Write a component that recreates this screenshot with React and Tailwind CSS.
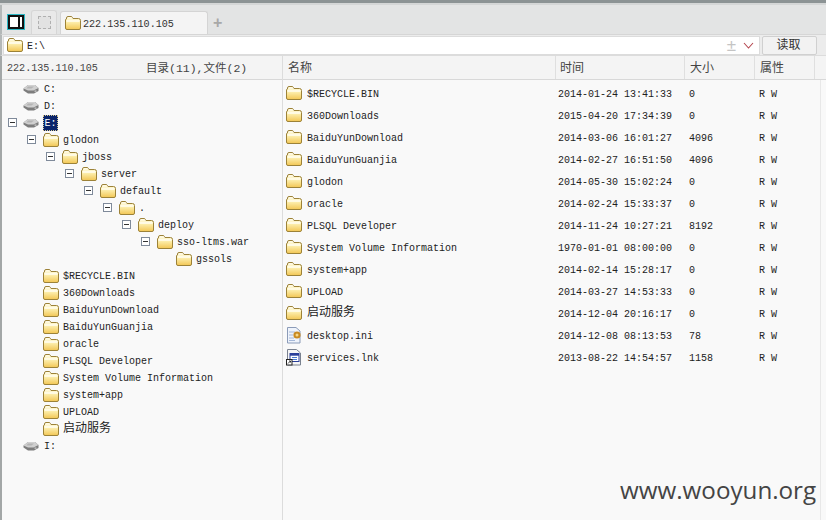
const MONO = "font-['Liberation_Mono','Noto_Sans_CJK_SC',monospace]";

function Folder({ className = "" }) {
  return (
    <svg width="16" height="14" viewBox="0 0 16 14" className={"shrink-0 " + className}>
      <defs>
        <linearGradient id="fg" x1="0" y1="0" x2="0" y2="1">
          <stop offset="0" stopColor="#fffdf0" />
          <stop offset="0.4" stopColor="#fdf0b0" />
          <stop offset="1" stopColor="#f2c654" />
        </linearGradient>
      </defs>
      <path d="M1.5 3 V2 Q1.5 .5 3 .5 H6 Q7 .5 7.5 1.5 L8 2.5 H13.5 Q15.5 2.5 15.5 4.5 V12 Q15.5 13.5 14 13.5 H2 Q.5 13.5 .5 12 V4 Q.5 3 1.5 3 Z" fill="url(#fg)" stroke="#9c8238" strokeWidth="1" />
      <path d="M1.5 5 H14.5" stroke="#fffef6" strokeWidth="1.4" />
    </svg>
  );
}

function Disk({ className = "" }) {
  return (
    <svg width="16" height="10" viewBox="0 0 16 10" className={"shrink-0 " + className}>
      <path d="M.5 4.5 L5 1 H12 L15.5 4 V7 L11 9.5 H5 L.5 6.5 Z" fill="#7d7d7d" />
      <path d="M.5 4.5 L5 1 H12 L15.5 4 L10.5 6.5 H5 Z" fill="#d0d0d0" />
      <path d="M5 2.5 H11 L8.5 4.5 H3.5 Z" fill="#b4b4b4" />
      <rect x="11.5" y="6.6" width="2" height="1" fill="#e5e5e5" />
    </svg>
  );
}

function IniIcon() {
  return (
    <svg width="16" height="17" viewBox="0 0 16 17" className="shrink-0">
      <path d="M1.5 .5 H10 L14 4 V16 H1.5 Z" fill="#eef3fb" stroke="#8b9bb8" />
      <path d="M3 5 H9 M3 8 H7 M3 11 H8 M3 13.5 H9" stroke="#a5b8d8" />
      <circle cx="11" cy="8" r="3.6" fill="#c98a22" />
      <circle cx="11" cy="8" r="1.5" fill="#f5d88a" />
    </svg>
  );
}

function LnkIcon() {
  return (
    <svg width="16" height="17" viewBox="0 0 16 17" className="shrink-0">
      <path d="M1.5 .5 H10.5 L14.5 4 V16 H1.5 Z" fill="#f6f6f6" stroke="#7a8290" />
      <rect x="4" y="4.5" width="9" height="8" fill="#ffffff" stroke="#2a3f9a" />
      <rect x="4" y="4.5" width="9" height="2.2" fill="#2a3f9a" />
      <path d="M6 8.5 H11 M6 10.5 H11" stroke="#4a7ad0" />
      <rect x=".5" y="10.5" width="5.5" height="5.5" fill="#fff" stroke="#222" />
      <path d="M2 14.5 L4.3 12.2 M3 12 H4.5 V13.5" stroke="#222" fill="none" strokeWidth=".9" />
    </svg>
  );
}

function Box() {
  return (
    <span className="flex w-[9px] h-[9px] shrink-0 items-center justify-center border border-[#7f8a9a] bg-white">
      <span className="block w-[5px] h-px bg-[#333]" />
    </span>
  );
}

const LEVEL = [
  "pl-[6px]", "pl-[25px]", "pl-[44px]", "pl-[63px]", "pl-[82px]",
  "pl-[101px]", "pl-[120px]", "pl-[139px]", "pl-[158px]",
];

const tree = [
  { l: 0, k: "disk", t: "C:" },
  { l: 0, k: "disk", t: "D:" },
  { l: 0, k: "disk", t: "E:", box: true, sel: true },
  { l: 1, k: "f", t: "glodon", box: true },
  { l: 2, k: "f", t: "jboss", box: true },
  { l: 3, k: "f", t: "server", box: true },
  { l: 4, k: "f", t: "default", box: true },
  { l: 5, k: "f", t: ".", box: true },
  { l: 6, k: "f", t: "deploy", box: true },
  { l: 7, k: "f", t: "sso-ltms.war", box: true },
  { l: 8, k: "f", t: "gssols" },
  { l: 1, k: "f", t: "$RECYCLE.BIN" },
  { l: 1, k: "f", t: "360Downloads" },
  { l: 1, k: "f", t: "BaiduYunDownload" },
  { l: 1, k: "f", t: "BaiduYunGuanjia" },
  { l: 1, k: "f", t: "oracle" },
  { l: 1, k: "f", t: "PLSQL Developer" },
  { l: 1, k: "f", t: "System Volume Information" },
  { l: 1, k: "f", t: "system+app" },
  { l: 1, k: "f", t: "UPLOAD" },
  { l: 1, k: "f", t: "启动服务", cjk: true },
  { l: 0, k: "disk", t: "I:" },
];

const files = [
  ["f", "$RECYCLE.BIN", "2014-01-24 13:41:33", "0"],
  ["f", "360Downloads", "2015-04-20 17:34:39", "0"],
  ["f", "BaiduYunDownload", "2014-03-06 16:01:27", "4096"],
  ["f", "BaiduYunGuanjia", "2014-02-27 16:51:50", "4096"],
  ["f", "glodon", "2014-05-30 15:02:24", "0"],
  ["f", "oracle", "2014-02-24 15:33:37", "0"],
  ["f", "PLSQL Developer", "2014-11-24 10:27:21", "8192"],
  ["f", "System Volume Information", "1970-01-01 08:00:00", "0"],
  ["f", "system+app", "2014-02-14 15:28:17", "0"],
  ["f", "UPLOAD", "2014-03-27 14:53:33", "0"],
  ["f", "启动服务", "2014-12-04 20:16:17", "0", true],
  ["ini", "desktop.ini", "2014-12-08 08:13:53", "78"],
  ["lnk", "services.lnk", "2013-08-22 14:54:57", "1158"],
];

function TreeRow({ r }) {
  return (
    <div className={"flex h-[17px] items-center " + LEVEL[r.l]}>
      {r.box ? <Box /> : <span className="w-[9px] shrink-0" />}
      {r.k === "disk" ? <Disk className="ml-[6px]" /> : <Folder className="ml-[7px]" />}
      {r.sel ? (
        <span className="ml-[4px] flex h-[16px] w-[15px] items-center justify-center bg-[#0a246a] pt-px text-white outline-1 outline-dotted -outline-offset-1 outline-[#d8c890]">
          {r.t}
        </span>
      ) : (
        <span
          className={
            "whitespace-pre " +
            (r.k === "disk" ? "ml-[5px] pt-px " : "ml-[4px] ") +
            (r.cjk ? "text-[12px]" : "pt-px")
          }
        >
          {r.t}
        </span>
      )}
    </div>
  );
}

function FileRow({ f }) {
  return (
    <div className="flex h-[22px] items-center">
      <span className="flex w-[24px] shrink-0 pl-[3px]">
        {f[0] === "f" ? <Folder /> : f[0] === "ini" ? <IniIcon /> : <LnkIcon />}
      </span>
      <span className={"w-[251px] shrink-0 whitespace-pre " + (f[4] ? "text-[12px]" : "pt-[2px]")}>{f[1]}</span>
      <span className="w-[131px] shrink-0 whitespace-pre pt-[2px]">{f[2]}</span>
      <span className="w-[70px] shrink-0 pt-[2px]">{f[3]}</span>
      <span className="whitespace-pre pt-[2px]">R W</span>
    </div>
  );
}

export default function App() {
  return (
    <div className={"relative flex h-[520px] w-[826px] flex-col overflow-hidden bg-[#f9f9f9] text-[10px] text-[#222] " + MONO}>
      {/* window top edge */}
      <div className="h-[3px] shrink-0 bg-[#8c9394]" />
      <div className="flex h-[2px] shrink-0 bg-[#d4d6d6]" />

      {/* tab bar */}
      <div className="flex h-[30px] shrink-0 items-end border-b border-l-[2px] border-b-[#d6d6d6] border-l-[#b4b8b8] bg-[#e3e4e4] pl-[5px]">
        <div className="mb-[4px] flex h-[16px] w-[18px] items-stretch border border-[#2bb7c4]">
          <div className="flex flex-1 justify-end border-2 border-[#111] bg-white pr-[2px]">
            <span className="w-[2px] bg-[#111]" />
          </div>
        </div>
        <div className="ml-[6px] flex h-[24px] w-[26px] items-center justify-center rounded-t-[3px] border border-b-0 border-[#d6d6d6] bg-[#e9e9e9]">
          <span className="block h-[13px] w-[13px] border border-dashed border-[#b0b0b0] bg-[#e2e2e2]" />
        </div>
        <div className="ml-[3px] flex h-[23px] w-[148px] items-center rounded-t-[3px] border border-b-0 border-[#d4d4d4] bg-[#f4f4f4] pl-[4px] text-[10.1px]">
          <Folder />
          <span className="ml-[2px] pt-[3px] text-[#333]">222.135.110.105</span>
        </div>
        <span className="mb-[3px] ml-[5px] font-['Liberation_Sans',sans-serif] text-[16px] font-bold leading-none text-[#a8a8a8]">+</span>
      </div>

      {/* address bar */}
      <div className="flex h-[21px] shrink-0 items-center border-b border-l-[2px] border-b-[#dcdcdc] border-l-[#b4b8b8] bg-[#ececec] pl-px">
        <div className="flex h-[19px] w-[757px] items-center border border-[#dcdcdc] bg-white pl-[3px]">
          <Folder />
          <span className="ml-[4px] pt-[2px]">E:\</span>
          <span className="ml-auto font-['Liberation_Sans',sans-serif] text-[17px] leading-none text-[#c4c4c4]">±</span>
          <svg width="11" height="7" viewBox="0 0 11 7" className="ml-[7px] mr-[5px]">
            <path d="M1 1 L5.5 6 L10 1" fill="none" stroke="#b5474f" strokeWidth="1.1" />
          </svg>
        </div>
        <div className="ml-[2px] flex h-[19px] w-[55px] items-center justify-center rounded-[2px] border border-[#d0d0d0] bg-[#f2f2f2] pr-[2px] pt-[2px] text-[12px] text-[#333]">
          读取
        </div>
      </div>

      {/* panes */}
      <div className="flex min-h-0 flex-1 border-l-[2px] border-[#a3a7a7]">
        <div className="flex w-[281px] shrink-0 flex-col border-r border-[#dcdcdc]">
          <div className="flex h-[24px] shrink-0 items-center border-b border-[#d8d8d8] bg-[#f4f4f4] pl-[5px] pt-[2px] text-[#444]">
            <span className="w-[139px] text-[10.1px]">222.135.110.105</span>
            <span className="text-[11.5px]">目录(11),文件(2)</span>
          </div>
          <div>
            {tree.map((r, i) => (
              <TreeRow key={i} r={r} />
            ))}
          </div>
        </div>
        <div className="flex min-w-0 flex-1 flex-col">
          <div className="flex h-[24px] shrink-0 items-center border-b border-[#d8d8d8] bg-[#f4f4f4] text-[12px] text-[#444]">
            <span className="h-full w-[273px] shrink-0 border-r border-[#dfdfdf] pl-[5px] leading-[26px]">名称</span>
            <span className="h-full w-[129px] shrink-0 border-r border-[#dfdfdf] pl-[4px] leading-[26px]">时间</span>
            <span className="h-full w-[70px] shrink-0 border-r border-[#dfdfdf] pl-[5px] leading-[26px]">大小</span>
            <span className="h-full w-[60px] shrink-0 border-r border-[#dfdfdf] pl-[5px] leading-[26px]">属性</span>
          </div>
          <div className="pt-[2px]">
            {files.map((f, i) => (
              <FileRow key={i} f={f} />
            ))}
          </div>
        </div>
      </div>

      {/* watermark */}
      <span className="absolute left-[620px] top-[475px] font-['Open_Sans',sans-serif] text-[24.2px] leading-[30px] text-[#444]">
        www.wooyun.org
      </span>
      <span className="absolute bottom-0 right-[5px] top-[80px] w-px bg-[#e8e8e8]" />
    </div>
  );
}
